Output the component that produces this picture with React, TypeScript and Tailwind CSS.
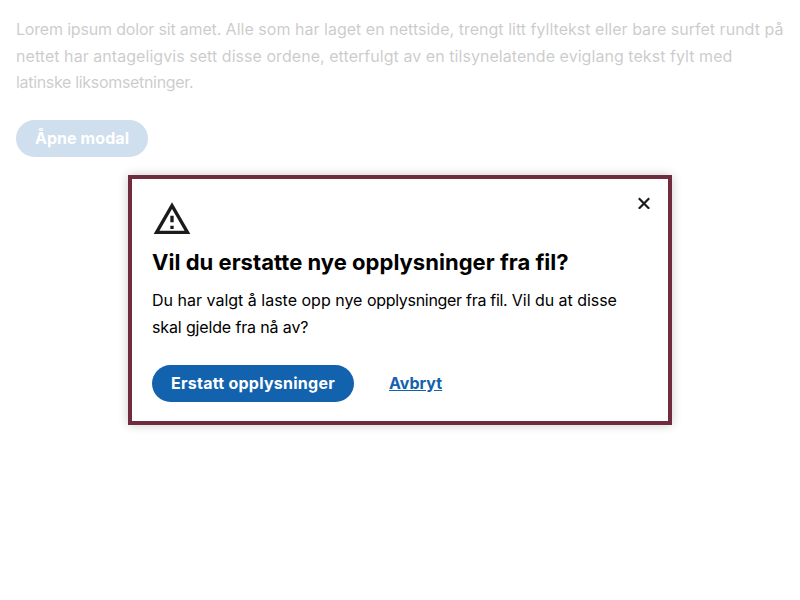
import React from "react";

export default function App() {
  return (
    <div className="relative h-[600px] w-[800px] overflow-hidden bg-white font-['Inter',sans-serif] text-base leading-[26.67px] text-black [font-feature-settings:'calt'_0]">
      <main className="p-4 opacity-20">
        <p className="whitespace-nowrap">
          <span className="block tracking-[0.02px]">
            <span className="tracking-[-0.18px]">Lorem ipsum dolor sit amet.</span> Alle som har laget en nettside, trengt litt fylltekst eller bare surfet rundt på
          </span>
          <span className="block tracking-[0.05px]">nettet har antageligvis sett disse ordene, etterfulgt av en tilsynelatende eviglang tekst fylt med</span>
          <span className="block tracking-[-0.32px]">latinske liksomsetninger.</span>
        </p>
        <button className="mt-6 block h-[37px] w-[132px] rounded-full bg-[#1362ae] pb-0.5 text-base font-bold tracking-[0.08px] text-white">Åpne modal</button>
      </main>
      <div role="dialog" className="absolute top-[175px] left-32 h-[250px] w-[544px] border-4 border-[#6f2c3f] bg-white px-5 pt-5 shadow-[0_0_10px_rgba(0,0,0,0.2)]">
        <button aria-label="Lukk" className="absolute top-3 right-3 flex size-6 items-center justify-center">
          <svg width="12" height="12" viewBox="0 0 12 12" fill="none" stroke="#1b1b1b" strokeWidth="2.2">
            <path d="M.8 1.3 11.2 11.7M11.2 1.3.8 11.7" />
          </svg>
        </button>
        <svg className="block size-10" viewBox="0 0 24 24" fill="#1b1b1b">
          <path d="M12 5.99 19.53 19H4.47L12 5.99M12 2 1 21h22L12 2zm1 14h-2v2h2v-2zm0-6h-2v4h2v-4z" />
        </svg>
        <h1 className="mt-[7px] text-[22px] leading-8 font-bold tracking-[0.025px]">Vil du erstatte nye opplysninger fra fil?</h1>
        <p className="mt-[9px] whitespace-nowrap">
          <span className="block">
            Du har valgt å laste opp nye <span className="tracking-[-0.3px]">opplysninger fra fil.</span> <span className="tracking-[-0.04px]">Vil du at disse</span>
          </span>
          <span className="block tracking-[-0.14px]">skal gjelde fra nå av?</span>
        </p>
        <div className="mt-[25px] flex items-center gap-[35px]">
          <button className="h-[37px] w-[202px] rounded-full bg-[#1362ae] pb-0.5 font-bold tracking-[0.26px] text-white">Erstatt opplysninger</button>
          <a className="-mt-0.5 font-bold text-[#1362ae] underline">Avbryt</a>
        </div>
      </div>
    </div>
  );
}
